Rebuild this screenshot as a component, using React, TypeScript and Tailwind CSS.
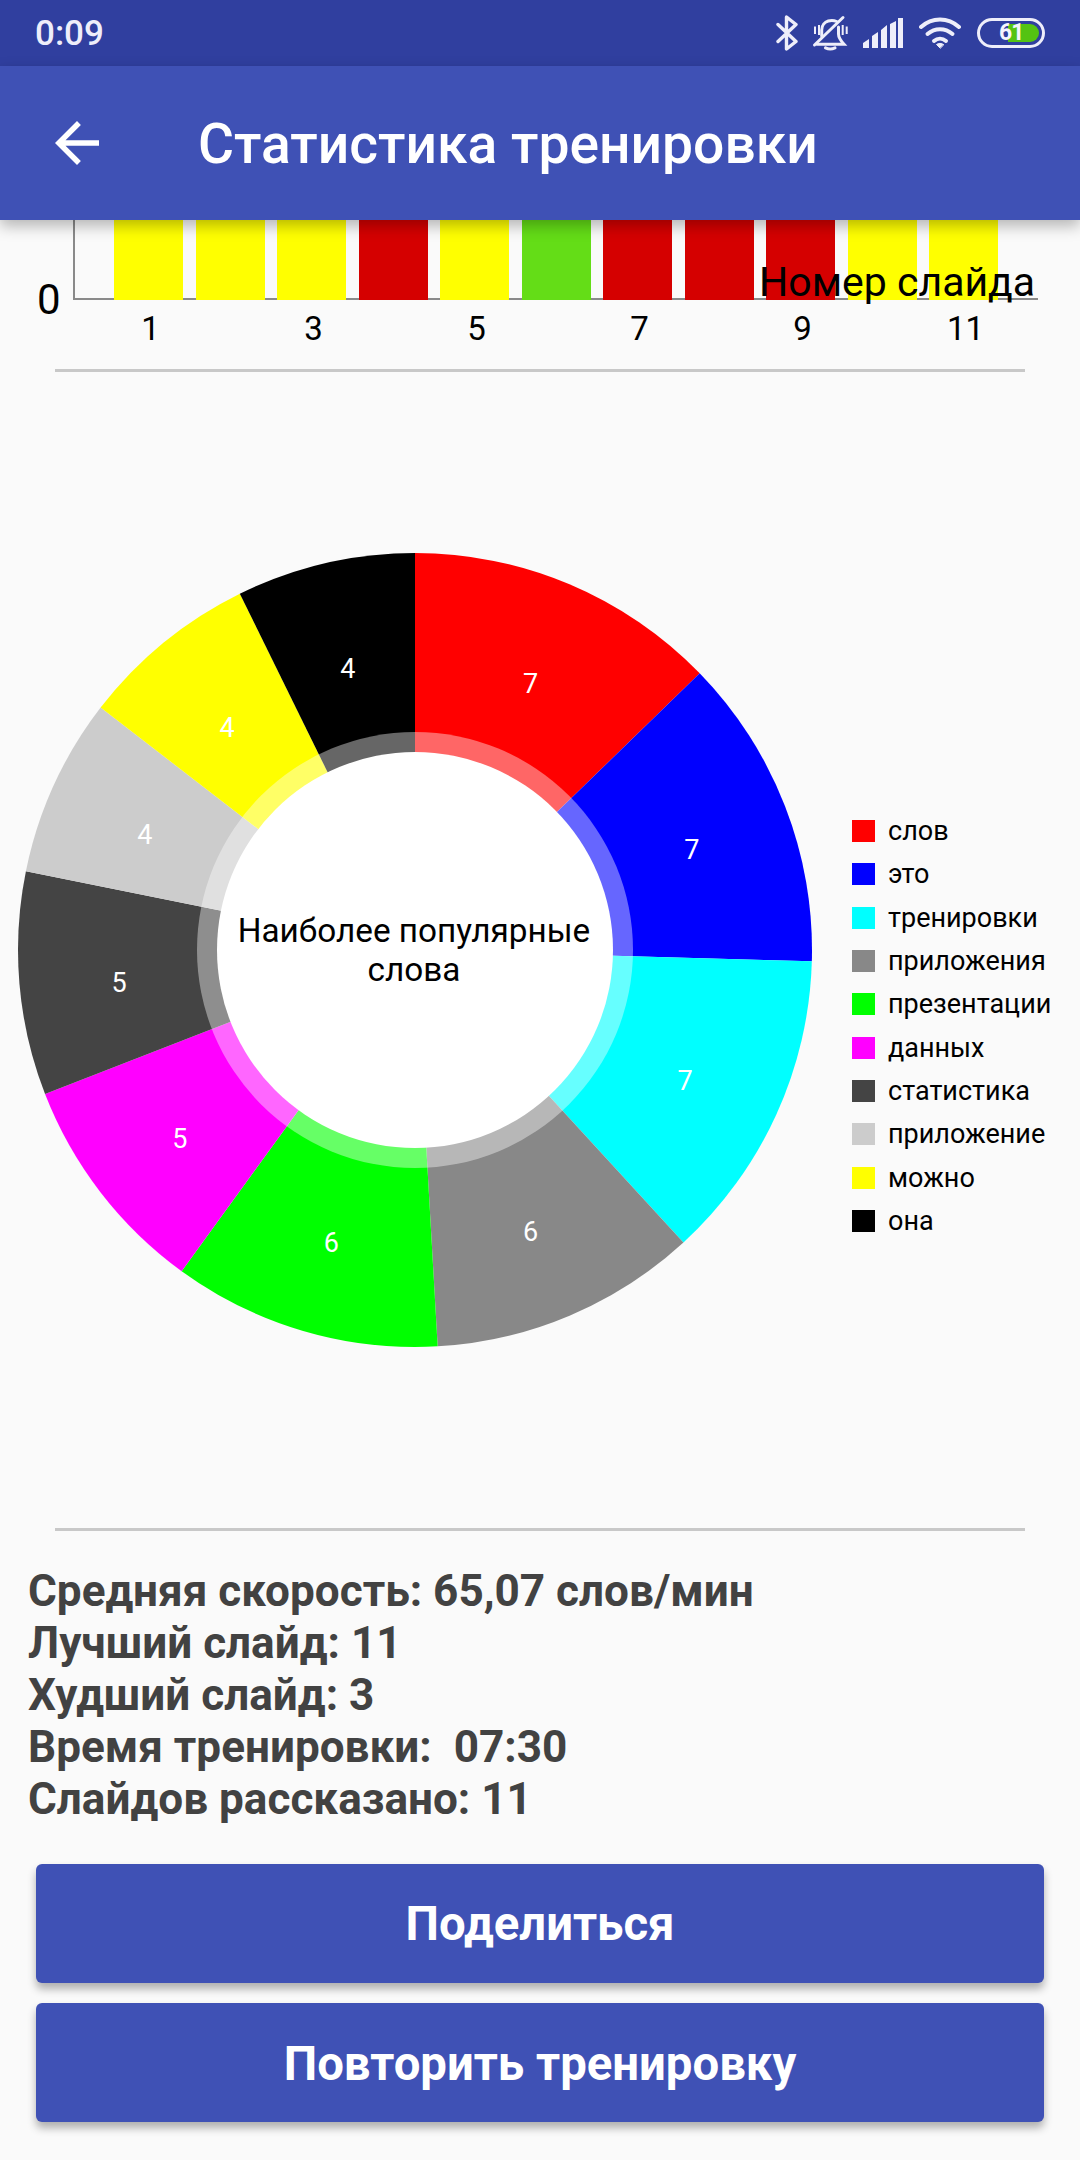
import React from "react";

const barColors = [
  "bg-[#ffff00]",
  "bg-[#ffff00]",
  "bg-[#ffff00]",
  "bg-[#d50000]",
  "bg-[#ffff00]",
  "bg-[#64dd17]",
  "bg-[#d50000]",
  "bg-[#d50000]",
  "bg-[#d50000]",
  "bg-[#ffff00]",
  "bg-[#ffff00]",
];

const ticks = ["1", "3", "5", "7", "9", "11"];

const words = [
  { label: "слов", value: 7, color: "#ff0000", swatch: "bg-[#ff0000]" },
  { label: "это", value: 7, color: "#0000ff", swatch: "bg-[#0000ff]" },
  { label: "тренировки", value: 7, color: "#00ffff", swatch: "bg-[#00ffff]" },
  { label: "приложения", value: 6, color: "#888888", swatch: "bg-[#888888]" },
  { label: "презентации", value: 6, color: "#00ff00", swatch: "bg-[#00ff00]" },
  { label: "данных", value: 5, color: "#ff00ff", swatch: "bg-[#ff00ff]" },
  { label: "статистика", value: 5, color: "#444444", swatch: "bg-[#444444]" },
  { label: "приложение", value: 4, color: "#cccccc", swatch: "bg-[#cccccc]" },
  { label: "можно", value: 4, color: "#ffff00", swatch: "bg-[#ffff00]" },
  { label: "она", value: 4, color: "#000000", swatch: "bg-[#000000]" },
];

const stats = [
  "Средняя скорость: 65,07 слов/мин",
  "Лучший слайд: 11",
  "Худший слайд: 3",
  "Время тренировки:\u00a0\u00a007:30",
  "Слайдов рассказано: 11",
];

const CX = 415;
const CY = 400;
const R = 397;
const RING = 218;
const HOLE = 198;

const polar = (r: number, deg: number) => {
  const a = (deg * Math.PI) / 180;
  return [CX + r * Math.sin(a), CY - r * Math.cos(a)];
};

const wedge = (r: number, from: number, to: number) => {
  const [x1, y1] = polar(r, from);
  const [x2, y2] = polar(r, to);
  return `M${CX} ${CY}L${x1} ${y1}A${r} ${r} 0 0 1 ${x2} ${y2}Z`;
};

const Donut = () => {
  const total = words.reduce((s, w) => s + w.value, 0);
  let angle = 0;
  const slices = words.map((w) => {
    const from = angle;
    angle += (w.value / total) * 360;
    return { ...w, from, to: angle };
  });

  return (
    <svg width={830} height={800} viewBox="0 0 830 800" className="shrink-0">
      {slices.map((s) => (
        <path key={s.label} d={wedge(R, s.from, s.to)} fill={s.color} />
      ))}
      <circle cx={CX} cy={CY} r={RING} fill="#ffffff" fillOpacity={0.4} />
      <circle cx={CX} cy={CY} r={HOLE} fill="#ffffff" />
      {slices.map((s) => {
        const [x, y] = polar(297, (s.from + s.to) / 2);
        return (
          <text
            key={s.label}
            x={x}
            y={y + 17}
            textAnchor="middle"
            fill="#ffffff"
            fontSize={27}
            fontFamily="Roboto, sans-serif"
          >
            {s.value}
          </text>
        );
      })}
    </svg>
  );
};

const StatusIcons = () => (
  <div className="flex items-center">
    {/* bluetooth */}
    <svg width={22} height={36} viewBox="0 0 22 36" fill="none" stroke="#eeeefa" strokeWidth={3.4} strokeLinejoin="round" strokeLinecap="round">
      <path d="M2 9.500l18 17L10.500 34V2L20 9.500 2 26.500" />
    </svg>
    {/* muted bell */}
    <svg width={36} height={36} viewBox="0 0 36 36" className="ml-[14px]" fill="none" stroke="#eeeefa" strokeWidth={3} strokeLinecap="round">
      <path d="M9.700 21V15c0-4.500 3-8 6.500-9 3-.9 6-.6 8.500.5" />
      <path d="M26.500 12v7c0 4 2.500 7 5.500 10.300H5" />
      <path d="M13.500 32.800c3 1.500 6.500 1.500 9.500 0" />
      <path d="M2.500 30L31 2.500" />
      <path d="M3 11.500v7.500M7 10v10M30.700 10v10M34.700 11.500v7.500" strokeWidth={2} strokeLinecap="butt" />
    </svg>
    {/* signal */}
    <svg width={40} height={30} viewBox="0 0 40 30" className="ml-[15px]" fill="#eeeefa">
      <path d="M0 25l6-4v9H0zM9 18l6-4v16H9zM18 12l6-5v23h-6zM27 6l6-3v27h-6zM35 0h5v30h-5z" />
    </svg>
    {/* wifi */}
    <svg width={42} height={32} viewBox="0 0 42 32" className="ml-[16px]" fill="none" stroke="#eeeefa" strokeWidth={4} strokeLinecap="round">
      <path d="M2 10c11-10 27-10 38 0" />
      <path d="M8.500 17c7.500-6.500 17.500-6.500 25 0" />
      <path d="M15 24c3.500-3 8.500-3 12 0" />
      <path d="M21 31l-3.500-3.500c2-1.500 5-1.500 7 0z" fill="#eeeefa" strokeWidth={1} />
    </svg>
    {/* battery */}
    <div className="ml-[16px] mr-[35px] h-[30px] w-[68px] rounded-full border-[3px] border-[#eeeefa] flex items-center justify-end p-[3px] relative">
      <div className="h-full w-[31px] rounded-r-full bg-[#54c312]" />
      <span className="absolute left-[19px] top-0 text-[23px] leading-[24px] font-bold text-[#f4f4fc] tracking-[-1px]">61</span>
    </div>
  </div>
);

export default function App() {
  return (
    <div className="w-[1080px] h-[2160px] overflow-hidden bg-[#fafafa] font-['Roboto',sans-serif]">
      <div className="h-[66px] bg-[#303f9f] flex items-center justify-between">
        <span className="ml-[35px] mt-[3px] text-[35px] font-medium text-[#eeeefa]">0:09</span>
        <StatusIcons />
      </div>

      <div className="relative z-10 h-[154px] bg-[#3f51b5] flex items-center shadow-[0_6px_14px_rgba(0,0,0,0.28)]">
        <svg width={66} height={66} viewBox="0 0 24 24" fill="#ffffff" className="ml-[44px] shrink-0">
          <path d="M20 11H7.830l5.590-5.590L12 4l-8 8 8 8 1.410-1.410L7.830 13H20v-2z" />
        </svg>
        <h1 className="ml-[88px] text-[55.200px] font-medium text-white mt-[2px]">Статистика тренировки</h1>
      </div>

      {/* bar chart, scrolled under the app bar */}
      <div className="relative h-[149px]">
        <div className="flex items-end h-[80px]">
          <span className="w-[73px] pl-[37px] text-[42px] leading-[40px] text-black -mb-[20px]">0</span>
          <div className="w-[965px] h-full flex items-end gap-[12.5px] pl-[39px] border-l-2 border-b-2 border-[#8a8a8a]">
            {barColors.map((c, i) => (
              <div key={i} className={`w-[69px] h-[80px] -mb-[2px] shrink-0 ${c}`} />
            ))}
          </div>
        </div>
        <div className="flex ml-[69px] mt-[11px]">
          {ticks.map((t) => (
            <span key={t} className="w-[163px] text-center text-[33px] leading-[36px] text-black">
              {t}
            </span>
          ))}
        </div>
        <span className="absolute left-[759px] top-[39px] text-[41px] leading-[46px] text-black">Номер слайда</span>
      </div>

      <div className="mx-[55px] h-[3px] bg-[#c8c8c8]" />

      <div className="relative h-[1156px] flex items-center">
        <div className="relative shrink-0">
          <Donut />
          <p className="absolute left-[216px] top-[361px] w-[396px] text-center text-[33.300px] leading-[39px] text-black">
            Наиболее популярные слова
          </p>
        </div>
        <ul className="ml-[22px] mt-[152px] flex flex-col gap-[21.300px]">
          {words.map((w) => (
            <li key={w.label} className="flex items-center h-[22px]">
              <span className={`w-[23px] h-[22px] shrink-0 ${w.swatch}`} />
              <span className="ml-[13px] text-[27px] leading-[22px] whitespace-nowrap text-black">{w.label}</span>
            </li>
          ))}
        </ul>
      </div>

      <div className="mx-[55px] h-[3px] bg-[#c8c8c8]" />

      <div className="ml-[28px] mt-[34px] text-[44.100px] leading-[52px] font-bold text-[#424242]">
        {stats.map((s) => (
          <div key={s}>{s}</div>
        ))}
      </div>

      <div className="mx-[36px] mt-[39px] flex flex-col gap-[20px]">
        <button className="h-[119px] pt-[2px] rounded-[6px] bg-[#3f51b5] text-white text-[47.300px] font-bold shadow-[0_6px_8px_rgba(0,0,0,0.3)]">
          Поделиться
        </button>
        <button className="h-[119px] pt-[3px] rounded-[6px] bg-[#3f51b5] text-white text-[47.300px] font-bold shadow-[0_6px_8px_rgba(0,0,0,0.3)]">
          Повторить тренировку
        </button>
      </div>
    </div>
  );
}
